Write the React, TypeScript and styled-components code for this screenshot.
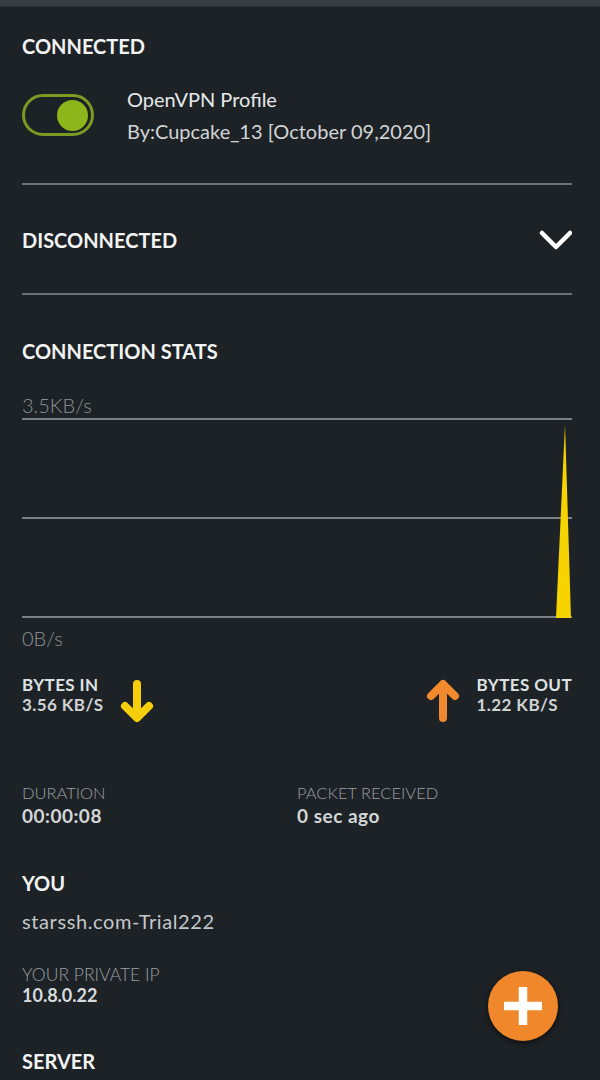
import React from 'react';
import styled, { createGlobalStyle } from 'styled-components';

const GlobalStyle = createGlobalStyle`
    html, body {
        margin: 0;
        padding: 0;
        background: #1d2226;
    }
    body {
        font-family: Lato, "Open Sans", sans-serif;
        color: #eceeef;
    }
`;

const Screen = styled.div`
    position: relative;
    width: 600px;
    height: 1080px;
    overflow: hidden;
    background: #1d2226;
`;

const TopStrip = styled.div`
    height: 6px;
    background: #363c40;
    border-bottom: 1px solid #2a3034;
`;

const Content = styled.div`
    padding: 0 28px 0 22px;
`;

const SectionTitle = styled.div<{ $top: number }>`
    margin-top: ${p => p.$top}px;
    font-size: 20px;
    line-height: 24px;
    font-weight: 700;
    color: #f2f3f3;
`;

const ProfileRow = styled.div`
    display: flex;
    align-items: center;
    gap: 33px;
    margin-top: 29px;
`;

const Toggle = styled.div`
    box-sizing: border-box;
    width: 72px;
    height: 42px;
    border-radius: 21px;
    border: 3px solid #7d9a22;
    display: flex;
    align-items: center;
    justify-content: flex-end;
    padding-right: 3px;
`;

const Knob = styled.div`
    width: 31px;
    height: 31px;
    border-radius: 50%;
    background: #8db61a;
`;

const ProfileText = styled.div`
    display: flex;
    flex-direction: column;
    gap: 8px;
    font-size: 20px;
    line-height: 24px;
    color: #e6e8e9;
`;

const ProfileSub = styled.div`
    color: #d2d5d6;
`;

const Divider = styled.div<{ $top: number }>`
    margin-top: ${p => p.$top}px;
    height: 2px;
    background: #6a7073;
`;

const CollapseRow = styled.div`
    display: flex;
    align-items: center;
    justify-content: space-between;
    height: 24px;
    margin-top: 43px;
`;

const RowTitle = styled(SectionTitle)`
    margin-top: 0;
`;

const ChartLabel = styled.div<{ $top: number }>`
    margin-top: ${p => p.$top}px;
    font-size: 20px;
    line-height: 24px;
    font-weight: 300;
    color: #8d9295;
`;

const Chart = styled.div`
    position: relative;
    height: 200px;
    margin-top: 1px;
    display: flex;
    flex-direction: column;
    justify-content: space-between;
`;

const GridLine = styled.div`
    height: 2px;
    background: #7a8083;
`;

const Spike = styled.svg`
    position: absolute;
    right: 0;
    bottom: 0;
`;

const RatesRow = styled.div`
    display: flex;
    justify-content: space-between;
    margin-top: 25px;
`;

const Rate = styled.div`
    display: flex;
    align-items: flex-start;
    gap: 16px;
`;

const ArrowBox = styled.svg`
    margin-top: 4px;
`;

const RateText = styled.div`
    font-size: 17px;
    line-height: 20px;
    font-weight: 700;
    letter-spacing: 0.4px;
    color: #dfe2e3;
`;

const RateValue = styled.div`
    color: #cfd3d4;
`;

const StatsGrid = styled.div`
    display: grid;
    grid-template-columns: 275px 1fr;
    margin-top: 60px;
`;

const StatLabel = styled.div`
    font-size: 16.5px;
    line-height: 20px;
    font-weight: 300;
    color: #9a9fa2;
`;

const StatValue = styled.div`
    margin-top: 2px;
    font-size: 19px;
    line-height: 22px;
    font-weight: 700;
    letter-spacing: 0.5px;
    color: #d4d7d8;
`;

const PlainValue = styled.div<{ $top: number }>`
    margin-top: ${p => p.$top}px;
    font-size: 20px;
    line-height: 24px;
    letter-spacing: 0.6px;
    color: #c4c8ca;
`;

const IpLabel = styled(StatLabel)`
    margin-top: 32px;
    font-size: 17.5px;
`;

const IpValue = styled.div`
    font-size: 18px;
    line-height: 20px;
    font-weight: 700;
    color: #d8dbdc;
`;

const Fab = styled.div`
    position: absolute;
    left: 488px;
    top: 971px;
    width: 70px;
    height: 70px;
    border-radius: 50%;
    background: #f0882b;
    box-shadow: 0 2px 6px rgba(0, 0, 0, 0.6);
    display: flex;
    align-items: center;
    justify-content: center;
`;

const Chevron = () => (
    <svg width="34" height="22" viewBox="0 0 34 22">
        <path d="M4 4 L18 18 L32 4" fill="none" stroke="#ffffff" strokeWidth="4.5" strokeLinecap="round" strokeLinejoin="round" />
    </svg>
);

const Arrow = ({ color, up }: { color: string, up?: boolean }) => (
    <ArrowBox width="36" height="44" viewBox="0 0 36 44" style={up ? { transform: 'rotate(180deg)' } : undefined}>
        <path d="M18 5 V38 M6 27 L18 39 L30 27" fill="none" stroke={color} strokeWidth="8" strokeLinecap="round" strokeLinejoin="round" />
    </ArrowBox>
);

export default function App() {
    return (
        <Screen>
            <GlobalStyle />
            <TopStrip />
            <Content>
                <SectionTitle $top={27}>CONNECTED</SectionTitle>
                <ProfileRow>
                    <Toggle><Knob /></Toggle>
                    <ProfileText>
                        <div>OpenVPN Profile</div>
                        <ProfileSub>By:Cupcake_13 [October 09,2020]</ProfileSub>
                    </ProfileText>
                </ProfileRow>
                <Divider $top={40} />

                <CollapseRow>
                    <RowTitle $top={0}>DISCONNECTED</RowTitle>
                    <Chevron />
                </CollapseRow>
                <Divider $top={41} />

                <SectionTitle $top={44}>CONNECTION STATS</SectionTitle>
                <ChartLabel $top={30}>3.5KB/s</ChartLabel>
                <Chart>
                    <GridLine />
                    <GridLine />
                    <GridLine />
                    <Spike width="17" height="196" viewBox="0 0 17 196">
                        <polygon points="1,196 10,2 16,196" fill="#f7d300" />
                    </Spike>
                </Chart>
                <ChartLabel $top={8}>0B/s</ChartLabel>

                <RatesRow>
                    <Rate>
                        <RateText>
                            <div>BYTES IN</div>
                            <RateValue>3.56 KB/S</RateValue>
                        </RateText>
                        <Arrow color="#f6cf0c" />
                    </Rate>
                    <Rate>
                        <Arrow color="#f08a2c" up />
                        <RateText>
                            <div>BYTES OUT</div>
                            <RateValue>1.22 KB/S</RateValue>
                        </RateText>
                    </Rate>
                </RatesRow>

                <StatsGrid>
                    <div>
                        <StatLabel>DURATION</StatLabel>
                        <StatValue>00:00:08</StatValue>
                    </div>
                    <div>
                        <StatLabel>PACKET RECEIVED</StatLabel>
                        <StatValue>0 sec ago</StatValue>
                    </div>
                </StatsGrid>

                <SectionTitle $top={44}>YOU</SectionTitle>
                <PlainValue $top={14}>starssh.com-Trial222</PlainValue>
                <IpLabel>YOUR PRIVATE IP</IpLabel>
                <IpValue>10.8.0.22</IpValue>

                <SectionTitle $top={44}>SERVER</SectionTitle>
            </Content>
            <Fab>
                <svg width="40" height="40" viewBox="0 0 40 40">
                    <path d="M20 1 V39 M1 20 H39" stroke="#ffffff" strokeWidth="8.5" />
                </svg>
            </Fab>
        </Screen>
    );
}
